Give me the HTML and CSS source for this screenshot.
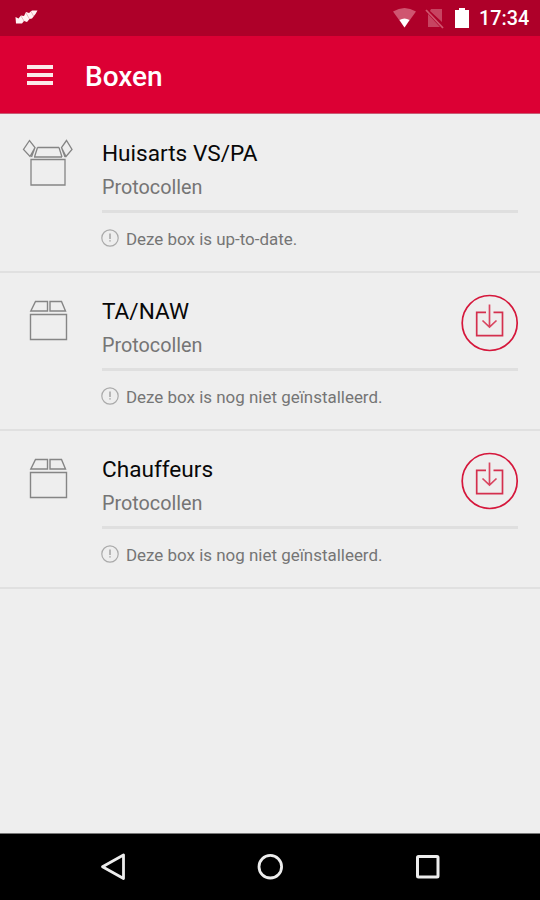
FILE: index.html
```html
<!DOCTYPE html>
<html lang="nl">
<head>
<meta charset="utf-8">
<title>Boxen</title>
<link rel="stylesheet" href="styles.css">
</head>
<body>
<svg class="defs" width="0" height="0">
  <symbol id="info" viewBox="0 0 18 18"><circle cx="9" cy="9" r="8.2" fill="none" stroke="#aaa" stroke-width="1.2"/><path d="M9 4.500V10M9 11.3v1.200" stroke="#999" stroke-width="1.3"/></symbol>
  <symbol id="closed" viewBox="0 0 52 48"><path d="M8.500 17.500H44.500V42.500H8.500ZM8.800 14L13.500 4.500H25.500V14ZM28 4.500H39.500L43.500 14H28Z" fill="none" stroke="#858585" stroke-width="1.4"/></symbol>
  <symbol id="open" viewBox="0 0 52 48"><path d="M9 20.500H43V46H9ZM12 18H40M15.500 8.500H37M15.500 8.500L12.500 18M37 8.500L40 18M7.500 1.500L1.500 10.500L8 17.500L13 8.500ZM44.500 1.500L39.500 8.500L44 17.500L50 10.500ZM13 8.500L9.500 18M39.500 8.500L43 18" fill="none" stroke="#858585" stroke-width="1.3"/></symbol>
  <symbol id="download" viewBox="0 0 58 58"><circle cx="28.700" cy="29" r="27.500" fill="none" stroke="#d5173b" stroke-width="1.7"/><path d="M25 18.300H15.700V41.700H41.500V18.300H32.500" fill="none" stroke="#d4304e" stroke-width="1.7"/><path d="M28.500 10.500V33M21.500 26.500L28.500 33L35.500 26.500" fill="none" stroke="#d94560" stroke-width="1.7"/></symbol>
</svg>
<header class="status">
  <svg class="logo" width="24" height="16" viewBox="0 0 24 16"><path d="M0.500 7L3.500 8.500L6 5.500L9 6L11 2L14 3L17 0.500H22.500L20.500 4L17 8.500L14.500 9L12 12L9 11L7 13.500H1Z" fill="#fff3f4"/><path d="M6 6L9 11M11 3L14.500 9M16 1.500L18.500 6" stroke="#e3a5af" stroke-width="0.800"/></svg>
  <svg width="24" height="20" viewBox="0 0 24 20"><path d="M0 3.500Q11.500-3.500 23 3.500L11.500 19.500Z" fill="#cf5570"/><path d="M6.500 12Q11.500 9 16.500 12L11.500 19.500Z" fill="#fff"/></svg>
  <svg class="sim" width="20" height="21" viewBox="0 0 20 21"><path d="M6 1H17V14L5 3ZM3 6L15 19H3Z" fill="#c74461"/><path d="M1 2L18 20" stroke="#d0566f" stroke-width="1.8"/></svg>
  <svg class="battery" width="14" height="20" viewBox="0 0 14 20"><path d="M4 0H10V2H14V20H0V2H4Z" fill="#fff"/></svg>
  <span class="clock">17:34</span>
</header>
<nav class="bar">
  <div class="menu"><i></i><i></i><i></i></div>
  <h1>Boxen</h1>
</nav>
<main class="list">
  <section class="item">
    <svg class="box" width="52" height="48"><use href="#open"/></svg>
    <div class="body">
      <div class="top"><h2>Huisarts VS/PA</h2><p>Protocollen</p></div>
      <div class="note"><svg width="18" height="18"><use href="#info"/></svg><span>Deze box is up-to-date.</span></div>
    </div>
  </section>
  <section class="item">
    <svg class="box" width="52" height="48"><use href="#closed"/></svg>
    <div class="body">
      <div class="top"><h2>TA/NAW</h2><p>Protocollen</p><svg class="get" width="58" height="58"><use href="#download"/></svg></div>
      <div class="note"><svg width="18" height="18"><use href="#info"/></svg><span>Deze box is nog niet geïnstalleerd.</span></div>
    </div>
  </section>
  <section class="item">
    <svg class="box" width="52" height="48"><use href="#closed"/></svg>
    <div class="body">
      <div class="top"><h2>Chauffeurs</h2><p>Protocollen</p><svg class="get" width="58" height="58"><use href="#download"/></svg></div>
      <div class="note"><svg width="18" height="18"><use href="#info"/></svg><span>Deze box is nog niet geïnstalleerd.</span></div>
    </div>
  </section>
</main>
<footer class="keys">
  <svg width="26" height="28" viewBox="0 0 26 28"><path d="M23.500 2V25.500L2.500 13.700Z" fill="none" stroke="#ededed" stroke-width="2.800" stroke-linejoin="round"/></svg>
  <svg width="26" height="28" viewBox="0 0 26 28"><circle cx="13.300" cy="13.700" r="11.300" fill="none" stroke="#ededed" stroke-width="2.800"/></svg>
  <svg width="26" height="28" viewBox="0 0 26 28"><rect x="3.500" y="3.500" width="20.500" height="20.500" rx="1" fill="none" stroke="#ededed" stroke-width="3"/></svg>
</footer>
</body>
</html>
```
FILE: styles.css
```css
* { box-sizing: border-box; margin: 0; }
body { width: 540px; height: 900px; display: flex; flex-direction: column; background: #eee; font-family: Roboto, sans-serif; overflow: hidden; }
svg { display: block; flex: none; }
.defs { position: absolute; }
.status { height: 36px; flex: none; display: flex; align-items: center; padding: 0 11px 0 15px; background: #ae0029; }
.logo { margin-right: auto; }
.sim { margin-left: 8px; }
.battery { margin-left: 10px; }
.clock { margin-left: 10px; width: 50px; color: #fff; font-size: 19.800px; font-weight: 500; line-height: 36px; padding-top: 2px; white-space: nowrap; }
.bar { height: 78px; flex: none; display: flex; align-items: center; padding-left: 27px; background: #dc0034; border-bottom: 1px solid #c75b74; }
.menu { width: 26px; height: 20px; display: flex; flex-direction: column; justify-content: space-between; }
.menu i { height: 4px; background: #fbe9e9; }
h1 { margin-left: 32px; padding-top: 4px; color: #fff; font-size: 28px; font-weight: 500; line-height: 34px; }
.list { flex: 1; padding-top: 1px; }
.item { height: 158px; display: flex; padding: 0 22px; border-bottom: 2px solid #e0e0e0; }
.box { margin-top: 24px; }
.body { flex: 1; margin-left: 28px; }
.top { height: 98px; padding-top: 24px; border-bottom: 3px solid #dfdfdf; position: relative; }
h2 { color: #080808; font-size: 22.600px; font-weight: 400; line-height: 30px; }
p { color: #757575; font-size: 19.800px; line-height: 26px; margin-top: 6px; }
.get { position: absolute; top: 21px; right: -1px; }
.note { height: 51px; display: flex; align-items: center; gap: 7px; color: #757575; font-size: 16.950px; }
.note svg { margin: -2px 0 0 -1px; }
.keys { height: 67px; flex: none; display: flex; justify-content: center; align-items: center; gap: 131px; background: #000; border-top: 1px solid #777; }
```
